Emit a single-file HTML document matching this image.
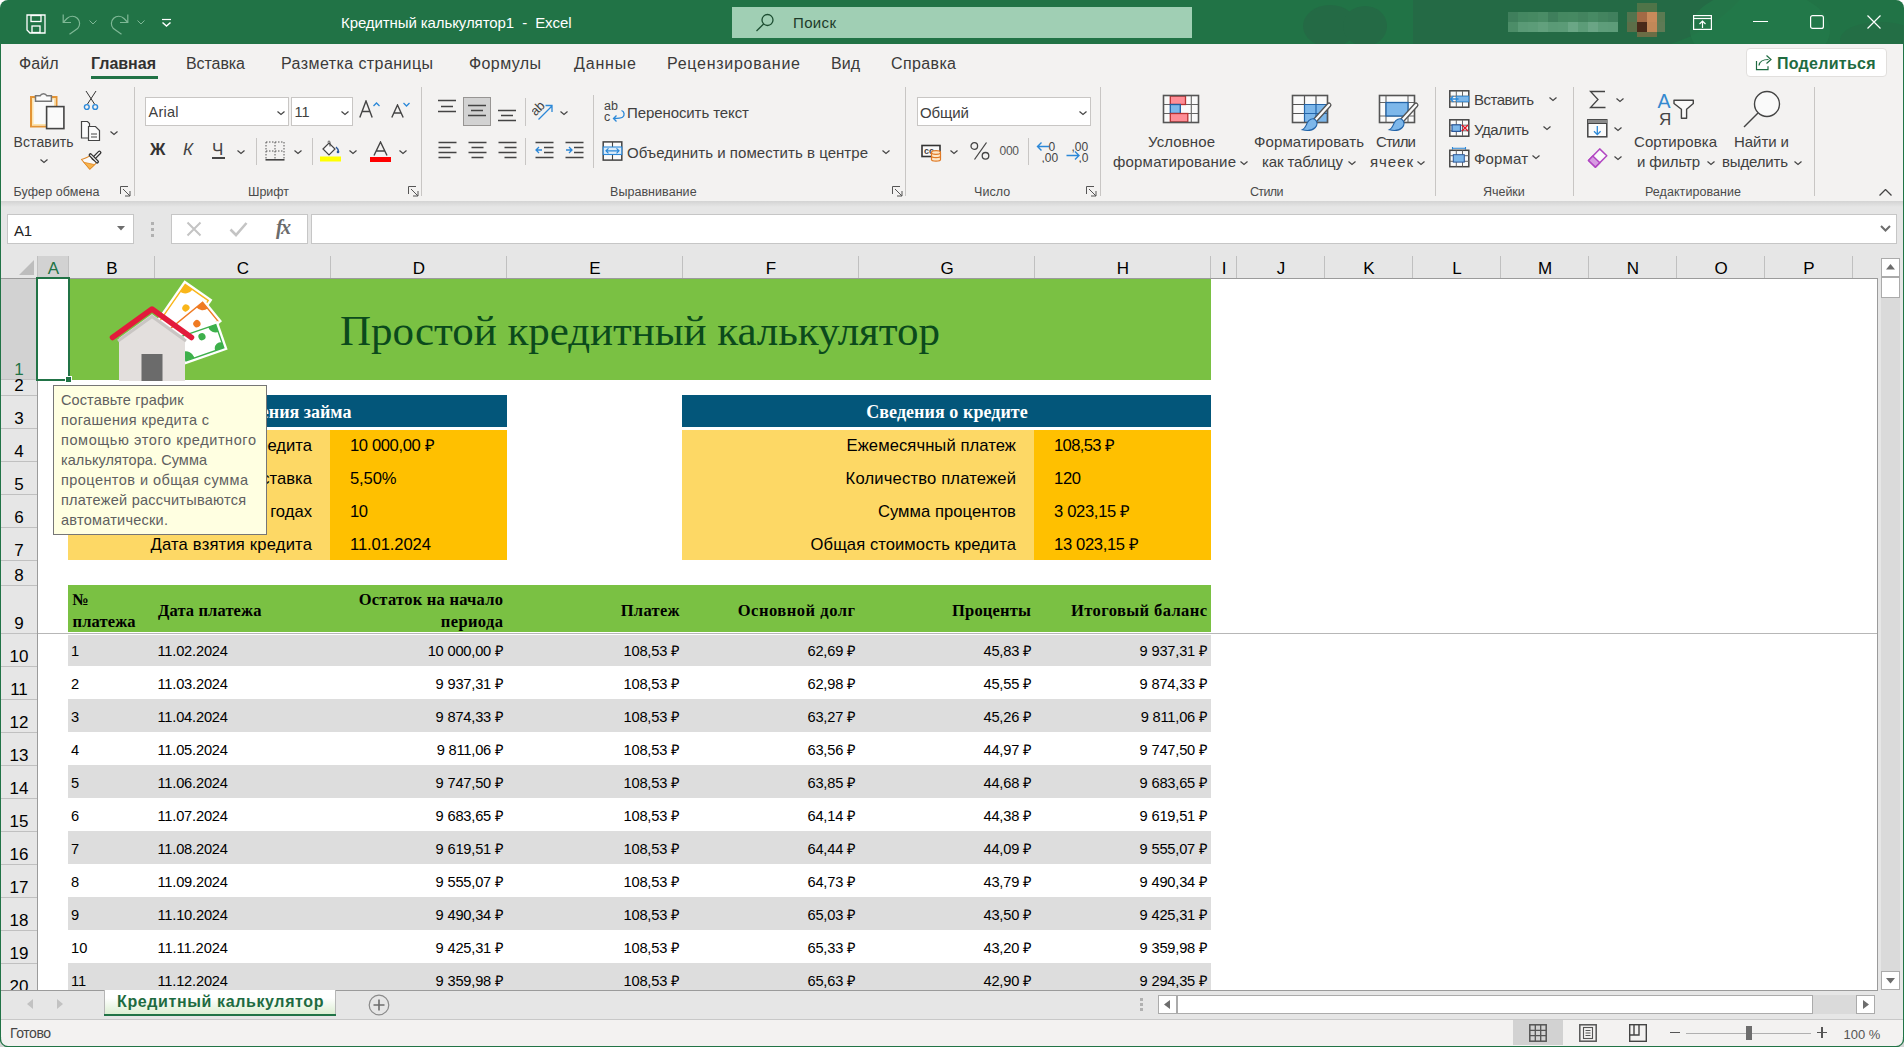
<!DOCTYPE html>
<html><head><meta charset="utf-8"><style>
html,body{margin:0;padding:0;background:#fff;width:1904px;height:1047px;overflow:hidden;position:relative;font-family:"Liberation Sans",sans-serif;}
.r{position:absolute;}
.t{position:absolute;white-space:nowrap;}
</style></head><body>
<div class="r" style="left:0px;top:0px;width:1904px;height:44px;background:#217346;border-radius:8px 8px 0 0;overflow:hidden;"></div>
<svg class="r" style="left:1250px;top:0px;" width="654" height="44" viewBox="0 0 654 44"><ellipse cx="80" cy="26" rx="27" ry="21" fill="#246a45"/><ellipse cx="115" cy="26" rx="22" ry="20" fill="#246a45"/><path d="M163 0H490C470 20 450 35 420 44H163z" fill="#246a45"/><ellipse cx="510" cy="30" rx="70" ry="40" fill="#237a4a" opacity="0.7"/><ellipse cx="630" cy="40" rx="40" ry="18" fill="#246a45" opacity="0.6"/></svg>
<svg class="r" style="left:26px;top:14px;" width="20" height="20" viewBox="0 0 20 20"><path d="M1 1h18v18H4l-3-3z" fill="none" stroke="#fff" stroke-width="1.3"/><rect x="5" y="1.5" width="10" height="6" fill="none" stroke="#fff" stroke-width="1.3"/><rect x="6" y="12" width="8" height="6.5" fill="none" stroke="#fff" stroke-width="1.3"/></svg>
<svg class="r" style="left:61px;top:13px;" width="22" height="22" viewBox="0 0 22 22"><path d="M2.2 1.5V9.5H10" fill="none" stroke="#7fb896" stroke-width="1.2"/><path d="M2.2 9.5L6 5.5A7.3 7.3 0 0 1 16.6 15.6L8.5 21.3" fill="none" stroke="#7fb896" stroke-width="1.2"/></svg>
<svg class="r" style="left:89px;top:20px;" width="8" height="5" viewBox="0 0 8 5"><path d="M0.5 0.5l3.5 3.5l3.5-3.5" fill="none" stroke="#7fb896" stroke-width="1"/></svg>
<svg class="r" style="left:108px;top:13px;" width="22" height="22" viewBox="0 0 22 22"><path d="M19.8 1.5V9.5H12" fill="none" stroke="#7fb896" stroke-width="1.2"/><path d="M19.8 9.5L16 5.5A7.3 7.3 0 0 0 5.4 15.6L13.5 21.3" fill="none" stroke="#7fb896" stroke-width="1.2"/></svg>
<svg class="r" style="left:137px;top:20px;" width="8" height="5" viewBox="0 0 8 5"><path d="M0.5 0.5l3.5 3.5l3.5-3.5" fill="none" stroke="#7fb896" stroke-width="1"/></svg>
<svg class="r" style="left:161px;top:18px;" width="11" height="10" viewBox="0 0 11 10"><path d="M1 1.5h9" stroke="#fff" stroke-width="1.2"/><path d="M1.5 4.5l4 3.5l4-3.5" fill="none" stroke="#fff" stroke-width="1.5"/></svg>
<div class="t" style="left:341.00px;top:15.00px;font-size:15px;line-height:15px;color:#ffffff;letter-spacing:-0.092px;white-space:pre;">Кредитный калькулятор1  -  Excel</div>
<div class="r" style="left:732px;top:7px;width:460px;height:31px;background:#a0cfb4;"></div>
<svg class="r" style="left:755px;top:13px;" width="20" height="20" viewBox="0 0 20 20"><circle cx="12.5" cy="7" r="5.5" fill="none" stroke="#1d4e32" stroke-width="1.3"/><path d="M8.6 11 L1.5 18" stroke="#1d4e32" stroke-width="1.3"/></svg>
<div class="t" style="left:793.00px;top:15.00px;font-size:15px;line-height:15px;color:#1d3b2a;letter-spacing:0.359px;">Поиск</div>
<div class="r" style="left:1508px;top:12px;width:10px;height:10px;background:#3f7f5c;"></div>
<div class="r" style="left:1508px;top:22px;width:10px;height:10px;background:#4c8d68;"></div>
<div class="r" style="left:1518px;top:12px;width:10px;height:10px;background:#448761;"></div>
<div class="r" style="left:1518px;top:22px;width:10px;height:10px;background:#5a9a76;"></div>
<div class="r" style="left:1528px;top:12px;width:10px;height:10px;background:#468962;"></div>
<div class="r" style="left:1528px;top:22px;width:10px;height:10px;background:#5c9c78;"></div>
<div class="r" style="left:1538px;top:12px;width:10px;height:10px;background:#4a8c66;"></div>
<div class="r" style="left:1538px;top:22px;width:10px;height:10px;background:#62a07d;"></div>
<div class="r" style="left:1548px;top:12px;width:10px;height:10px;background:#3f7f5c;"></div>
<div class="r" style="left:1548px;top:22px;width:10px;height:10px;background:#5a9a76;"></div>
<div class="r" style="left:1558px;top:12px;width:10px;height:10px;background:#458861;"></div>
<div class="r" style="left:1558px;top:22px;width:10px;height:10px;background:#5b9b77;"></div>
<div class="r" style="left:1568px;top:12px;width:10px;height:10px;background:#468962;"></div>
<div class="r" style="left:1568px;top:22px;width:10px;height:10px;background:#6aa685;"></div>
<div class="r" style="left:1578px;top:12px;width:10px;height:10px;background:#43845f;"></div>
<div class="r" style="left:1578px;top:22px;width:10px;height:10px;background:#5c9c78;"></div>
<div class="r" style="left:1588px;top:12px;width:10px;height:10px;background:#478a64;"></div>
<div class="r" style="left:1588px;top:22px;width:10px;height:10px;background:#6aa585;"></div>
<div class="r" style="left:1598px;top:12px;width:10px;height:10px;background:#43845f;"></div>
<div class="r" style="left:1598px;top:22px;width:10px;height:10px;background:#5e9d7a;"></div>
<div class="r" style="left:1608px;top:12px;width:10px;height:10px;background:#40805d;"></div>
<div class="r" style="left:1608px;top:22px;width:10px;height:10px;background:#5d9c79;"></div>
<div class="r" style="left:1627px;top:12px;width:10px;height:10px;background:#52744e;"></div>
<div class="r" style="left:1637px;top:12px;width:10px;height:10px;background:#a36a45;"></div>
<div class="r" style="left:1647px;top:12px;width:10px;height:10px;background:#c98a5a;"></div>
<div class="r" style="left:1657px;top:12px;width:8px;height:10px;background:#5b7a52;"></div>
<div class="r" style="left:1627px;top:22px;width:10px;height:10px;background:#5c6e48;"></div>
<div class="r" style="left:1637px;top:22px;width:10px;height:10px;background:#4a2a1a;"></div>
<div class="r" style="left:1647px;top:22px;width:10px;height:10px;background:#c28858;"></div>
<div class="r" style="left:1657px;top:22px;width:8px;height:10px;background:#5e7a55;"></div>
<div class="r" style="left:1637px;top:3px;width:20px;height:9px;background:#4f7448;"></div>
<div class="r" style="left:1637px;top:32px;width:20px;height:5px;background:#6b6d45;"></div>
<svg class="r" style="left:1693px;top:15px;" width="19" height="15" viewBox="0 0 19 15"><rect x="0.6" y="0.6" width="17.8" height="13.8" fill="none" stroke="#fff" stroke-width="1.2"/><path d="M0.6 3.5h17.8" stroke="#fff" stroke-width="1.2"/><path d="M9.5 13V6M6.5 9l3-3l3 3" fill="none" stroke="#fff" stroke-width="1.2"/></svg>
<div class="r" style="left:1753px;top:21px;width:15px;height:1.3px;background:#fff;"></div>
<svg class="r" style="left:1810px;top:15px;" width="14" height="14" viewBox="0 0 14 14"><rect x="0.6" y="0.6" width="12.8" height="12.8" rx="2" fill="none" stroke="#fff" stroke-width="1.2"/></svg>
<svg class="r" style="left:1867px;top:15px;" width="14" height="14" viewBox="0 0 14 14"><path d="M0.5 0.5l13 13M13.5 0.5l-13 13" stroke="#fff" stroke-width="1.2"/></svg>
<div class="r" style="left:1px;top:44px;width:1902px;height:157px;background:#f3f2f1;"></div>
<div class="r" style="left:0px;top:44px;width:1px;height:1003px;background:#217346;"></div>
<div class="r" style="left:1903px;top:44px;width:1px;height:1003px;background:#217346;"></div>
<div class="t" style="left:19.00px;top:56.20px;font-size:16px;line-height:16px;color:#3b3a39;letter-spacing:0.055px;">Файл</div>
<div class="t" style="left:91.00px;top:56.20px;font-size:16px;line-height:16px;color:#323130;font-weight:bold;letter-spacing:-0.012px;">Главная</div>
<div class="t" style="left:186.00px;top:56.20px;font-size:16px;line-height:16px;color:#3b3a39;letter-spacing:-0.078px;">Вставка</div>
<div class="t" style="left:281.00px;top:56.20px;font-size:16px;line-height:16px;color:#3b3a39;letter-spacing:0.428px;">Разметка страницы</div>
<div class="t" style="left:469.00px;top:56.20px;font-size:16px;line-height:16px;color:#3b3a39;letter-spacing:0.396px;">Формулы</div>
<div class="t" style="left:574.00px;top:56.20px;font-size:16px;line-height:16px;color:#3b3a39;letter-spacing:0.839px;">Данные</div>
<div class="t" style="left:667.00px;top:56.20px;font-size:16px;line-height:16px;color:#3b3a39;letter-spacing:0.727px;">Рецензирование</div>
<div class="t" style="left:831.00px;top:56.20px;font-size:16px;line-height:16px;color:#3b3a39;letter-spacing:0.027px;">Вид</div>
<div class="t" style="left:891.00px;top:56.20px;font-size:16px;line-height:16px;color:#3b3a39;letter-spacing:0.372px;">Справка</div>
<div class="r" style="left:91px;top:76px;width:67px;height:3px;background:#217346;"></div>
<div class="r" style="left:1746px;top:48px;width:141px;height:29px;background:#ffffff;border:1px solid #e1dfdd;border-radius:4px;box-sizing:border-box;"></div>
<svg class="r" style="left:1754px;top:53px;" width="20" height="20" viewBox="0 0 20 20"><path d="M2.5 8v8.7h11.5v-3.5" fill="none" stroke="#1e6b41" stroke-width="1.2"/><path d="M5 12.5c0.5-4 3.5-6 9.5-6" fill="none" stroke="#1e6b41" stroke-width="1.2"/><path d="M12.5 2.5l4.5 4l-4.5 4" fill="none" stroke="#1e6b41" stroke-width="1.2"/></svg>
<div class="t" style="left:1777.00px;top:56.20px;font-size:16px;line-height:16px;color:#1f6b41;font-weight:bold;letter-spacing:0.275px;">Поделиться</div>
<div class="r" style="left:1px;top:201px;width:1902px;height:6px;background:linear-gradient(#d3d3d3,#e6e6e6);"></div>
<div class="r" style="left:1px;top:207px;width:1902px;height:49px;background:#e6e6e6;"></div>
<div class="r" style="left:7px;top:214px;width:127px;height:30px;background:#ffffff;border:1px solid #c6c6c6;box-sizing:border-box;"></div>
<div class="t" style="left:14.00px;top:223.00px;font-size:15px;line-height:15px;color:#222222;letter-spacing:-0.348px;">A1</div>
<svg class="r" style="left:117px;top:226px;" width="8" height="5" viewBox="0 0 8 5"><path d="M0 0h8l-4 4.5z" fill="#6d6d6d"/></svg>
<div class="r" style="left:151px;top:222px;width:3px;height:3px;background:#b1b1b1;"></div>
<div class="r" style="left:151px;top:228px;width:3px;height:3px;background:#b1b1b1;"></div>
<div class="r" style="left:151px;top:234px;width:3px;height:3px;background:#b1b1b1;"></div>
<div class="r" style="left:171px;top:214px;width:137px;height:30px;background:#ffffff;border:1px solid #c6c6c6;box-sizing:border-box;"></div>
<svg class="r" style="left:186px;top:221px;" width="16" height="16" viewBox="0 0 16 16"><path d="M1.5 1.5l13 13M14.5 1.5l-13 13" stroke="#c4c4c4" stroke-width="2"/></svg>
<svg class="r" style="left:229px;top:221px;" width="19" height="16" viewBox="0 0 19 16"><path d="M1.5 8.5l5.5 5.5l10.5-12" fill="none" stroke="#c4c4c4" stroke-width="2.6"/></svg>
<div class="t" style="left:276.00px;top:217.30px;font-size:20px;line-height:20px;color:#6b6b6b;font-family:'Liberation Serif',serif;font-weight:bold;letter-spacing:-1.661px;font-style:italic;">fx</div>
<div class="r" style="left:311px;top:214px;width:1586px;height:30px;background:#ffffff;border:1px solid #c6c6c6;box-sizing:border-box;"></div>
<svg class="r" style="left:1880px;top:225px;" width="11" height="7" viewBox="0 0 11 7"><path d="M1 1l4.5 4.5l4.5-4.5" fill="none" stroke="#6d6d6d" stroke-width="2"/></svg>
<div class="r" style="left:1px;top:256px;width:1902px;height:22px;background:#e6e6e6;"></div>
<div class="r" style="left:1px;top:278px;width:1877px;height:1px;background:#9b9b9b;"></div>
<svg class="r" style="left:19px;top:260px;" width="16" height="15" viewBox="0 0 16 15"><path d="M15 0v15H0z" fill="#bdbdbd"/></svg>
<div class="r" style="left:37px;top:256px;width:31px;height:22px;background:#d2d2d2;"></div>
<div class="r" style="left:37px;top:256px;width:1px;height:22px;background:#c0c0c0;"></div>
<div class="r" style="left:68px;top:256px;width:1px;height:22px;background:#c0c0c0;"></div>
<div class="r" style="left:154px;top:256px;width:1px;height:22px;background:#c0c0c0;"></div>
<div class="r" style="left:330px;top:256px;width:1px;height:22px;background:#c0c0c0;"></div>
<div class="r" style="left:506px;top:256px;width:1px;height:22px;background:#c0c0c0;"></div>
<div class="r" style="left:682px;top:256px;width:1px;height:22px;background:#c0c0c0;"></div>
<div class="r" style="left:858px;top:256px;width:1px;height:22px;background:#c0c0c0;"></div>
<div class="r" style="left:1034px;top:256px;width:1px;height:22px;background:#c0c0c0;"></div>
<div class="r" style="left:1210px;top:256px;width:1px;height:22px;background:#c0c0c0;"></div>
<div class="r" style="left:1236px;top:256px;width:1px;height:22px;background:#c0c0c0;"></div>
<div class="r" style="left:1324px;top:256px;width:1px;height:22px;background:#c0c0c0;"></div>
<div class="r" style="left:1412px;top:256px;width:1px;height:22px;background:#c0c0c0;"></div>
<div class="r" style="left:1500px;top:256px;width:1px;height:22px;background:#c0c0c0;"></div>
<div class="r" style="left:1588px;top:256px;width:1px;height:22px;background:#c0c0c0;"></div>
<div class="r" style="left:1676px;top:256px;width:1px;height:22px;background:#c0c0c0;"></div>
<div class="r" style="left:1764px;top:256px;width:1px;height:22px;background:#c0c0c0;"></div>
<div class="r" style="left:1852px;top:256px;width:1px;height:22px;background:#c0c0c0;"></div>
<div class="t" style="left:47.83px;top:260.40px;font-size:17px;line-height:17px;color:#217346;">A</div>
<div class="t" style="left:106.33px;top:260.40px;font-size:17px;line-height:17px;color:#000000;">B</div>
<div class="t" style="left:236.86px;top:260.40px;font-size:17px;line-height:17px;color:#000000;">C</div>
<div class="t" style="left:412.86px;top:260.40px;font-size:17px;line-height:17px;color:#000000;">D</div>
<div class="t" style="left:589.33px;top:260.40px;font-size:17px;line-height:17px;color:#000000;">E</div>
<div class="t" style="left:765.81px;top:260.40px;font-size:17px;line-height:17px;color:#000000;">F</div>
<div class="t" style="left:940.39px;top:260.40px;font-size:17px;line-height:17px;color:#000000;">G</div>
<div class="t" style="left:1116.86px;top:260.40px;font-size:17px;line-height:17px;color:#000000;">H</div>
<div class="t" style="left:1221.64px;top:260.40px;font-size:17px;line-height:17px;color:#000000;">I</div>
<div class="t" style="left:1276.75px;top:260.40px;font-size:17px;line-height:17px;color:#000000;">J</div>
<div class="t" style="left:1363.33px;top:260.40px;font-size:17px;line-height:17px;color:#000000;">K</div>
<div class="t" style="left:1452.27px;top:260.40px;font-size:17px;line-height:17px;color:#000000;">L</div>
<div class="t" style="left:1537.92px;top:260.40px;font-size:17px;line-height:17px;color:#000000;">M</div>
<div class="t" style="left:1626.86px;top:260.40px;font-size:17px;line-height:17px;color:#000000;">N</div>
<div class="t" style="left:1714.39px;top:260.40px;font-size:17px;line-height:17px;color:#000000;">O</div>
<div class="t" style="left:1803.33px;top:260.40px;font-size:17px;line-height:17px;color:#000000;">P</div>
<div class="r" style="left:1px;top:279px;width:36px;height:711px;background:#e6e6e6;"></div>
<div class="r" style="left:37px;top:279px;width:1px;height:711px;background:#9b9b9b;"></div>
<div class="r" style="left:1px;top:279px;width:36px;height:100px;background:#d2d2d2;"></div>
<div class="r" style="left:1px;top:379px;width:36px;height:1px;background:#c0c0c0;"></div>
<div class="t" style="left:14.27px;top:361.40px;font-size:17px;line-height:17px;color:#217346;">1</div>
<div class="r" style="left:1px;top:395px;width:36px;height:1px;background:#c0c0c0;"></div>
<div class="t" style="left:14.27px;top:376.90px;font-size:17px;line-height:17px;color:#000000;">2</div>
<div class="r" style="left:1px;top:428px;width:36px;height:1px;background:#c0c0c0;"></div>
<div class="t" style="left:14.27px;top:409.90px;font-size:17px;line-height:17px;color:#000000;">3</div>
<div class="r" style="left:1px;top:461px;width:36px;height:1px;background:#c0c0c0;"></div>
<div class="t" style="left:14.27px;top:442.90px;font-size:17px;line-height:17px;color:#000000;">4</div>
<div class="r" style="left:1px;top:494px;width:36px;height:1px;background:#c0c0c0;"></div>
<div class="t" style="left:14.27px;top:475.90px;font-size:17px;line-height:17px;color:#000000;">5</div>
<div class="r" style="left:1px;top:527px;width:36px;height:1px;background:#c0c0c0;"></div>
<div class="t" style="left:14.27px;top:508.90px;font-size:17px;line-height:17px;color:#000000;">6</div>
<div class="r" style="left:1px;top:560px;width:36px;height:1px;background:#c0c0c0;"></div>
<div class="t" style="left:14.27px;top:541.90px;font-size:17px;line-height:17px;color:#000000;">7</div>
<div class="r" style="left:1px;top:585px;width:36px;height:1px;background:#c0c0c0;"></div>
<div class="t" style="left:14.27px;top:566.90px;font-size:17px;line-height:17px;color:#000000;">8</div>
<div class="r" style="left:1px;top:633px;width:36px;height:1px;background:#c0c0c0;"></div>
<div class="t" style="left:14.27px;top:614.90px;font-size:17px;line-height:17px;color:#000000;">9</div>
<div class="r" style="left:1px;top:666px;width:36px;height:1px;background:#c0c0c0;"></div>
<div class="t" style="left:9.55px;top:647.90px;font-size:17px;line-height:17px;color:#000000;">10</div>
<div class="r" style="left:1px;top:699px;width:36px;height:1px;background:#c0c0c0;"></div>
<div class="t" style="left:10.18px;top:680.90px;font-size:17px;line-height:17px;color:#000000;">11</div>
<div class="r" style="left:1px;top:732px;width:36px;height:1px;background:#c0c0c0;"></div>
<div class="t" style="left:9.55px;top:713.90px;font-size:17px;line-height:17px;color:#000000;">12</div>
<div class="r" style="left:1px;top:765px;width:36px;height:1px;background:#c0c0c0;"></div>
<div class="t" style="left:9.55px;top:746.90px;font-size:17px;line-height:17px;color:#000000;">13</div>
<div class="r" style="left:1px;top:798px;width:36px;height:1px;background:#c0c0c0;"></div>
<div class="t" style="left:9.55px;top:779.90px;font-size:17px;line-height:17px;color:#000000;">14</div>
<div class="r" style="left:1px;top:831px;width:36px;height:1px;background:#c0c0c0;"></div>
<div class="t" style="left:9.55px;top:812.90px;font-size:17px;line-height:17px;color:#000000;">15</div>
<div class="r" style="left:1px;top:864px;width:36px;height:1px;background:#c0c0c0;"></div>
<div class="t" style="left:9.55px;top:845.90px;font-size:17px;line-height:17px;color:#000000;">16</div>
<div class="r" style="left:1px;top:897px;width:36px;height:1px;background:#c0c0c0;"></div>
<div class="t" style="left:9.55px;top:878.90px;font-size:17px;line-height:17px;color:#000000;">17</div>
<div class="r" style="left:1px;top:930px;width:36px;height:1px;background:#c0c0c0;"></div>
<div class="t" style="left:9.55px;top:911.90px;font-size:17px;line-height:17px;color:#000000;">18</div>
<div class="r" style="left:1px;top:963px;width:36px;height:1px;background:#c0c0c0;"></div>
<div class="t" style="left:9.55px;top:944.90px;font-size:17px;line-height:17px;color:#000000;">19</div>
<div class="t" style="left:9.55px;top:977.90px;font-size:17px;line-height:17px;color:#000000;">20</div>
<div class="r" style="left:38px;top:279px;width:1840px;height:711px;background:#ffffff;"></div>
<div class="r" style="left:68px;top:279px;width:1143px;height:101px;background:#7ac143;"></div>
<div class="t" style="left:340.00px;top:309.10px;font-size:43px;line-height:43px;color:#0b4a1c;font-family:'Liberation Serif',serif;letter-spacing:-0.039px;">Простой кредитный калькулятор</div>
<div class="r" style="left:68px;top:395px;width:439px;height:32px;background:#03567a;"></div>
<div class="r" style="left:682px;top:395px;width:529px;height:32px;background:#03567a;"></div>
<div class="t" style="left:222.49px;top:402.97px;font-size:18px;line-height:18px;color:#ffffff;font-family:'Liberation Serif',serif;font-weight:bold;">Значения займа</div>
<div class="t" style="left:866.25px;top:402.97px;font-size:18px;line-height:18px;color:#ffffff;font-family:'Liberation Serif',serif;font-weight:bold;letter-spacing:0.060px;">Сведения о кредите</div>
<div class="r" style="left:68px;top:430px;width:262px;height:130px;background:#fdd865;"></div>
<div class="r" style="left:330px;top:430px;width:177px;height:130px;background:#ffc000;"></div>
<div class="r" style="left:682px;top:430px;width:352px;height:130px;background:#fdd865;"></div>
<div class="r" style="left:1034px;top:430px;width:177px;height:130px;background:#ffc000;"></div>
<div class="t" style="left:194.26px;top:438.22px;font-size:16.6px;line-height:16.6px;color:#000000;">Сумма кредита</div>
<div class="t" style="left:350.00px;top:438.22px;font-size:16.6px;line-height:16.6px;color:#000000;letter-spacing:-0.391px;">10 000,00 ₽</div>
<div class="t" style="left:846.50px;top:438.22px;font-size:16.6px;line-height:16.6px;color:#000000;letter-spacing:0.083px;">Ежемесячный платеж</div>
<div class="t" style="left:1054.00px;top:438.22px;font-size:16.6px;line-height:16.6px;color:#000000;letter-spacing:-0.648px;">108,53 ₽</div>
<div class="t" style="left:99.46px;top:471.22px;font-size:16.6px;line-height:16.6px;color:#000000;">Годовая процентная ставка</div>
<div class="t" style="left:350.00px;top:471.22px;font-size:16.6px;line-height:16.6px;color:#000000;letter-spacing:-0.142px;">5,50%</div>
<div class="t" style="left:845.60px;top:471.22px;font-size:16.6px;line-height:16.6px;color:#000000;letter-spacing:0.168px;">Количество платежей</div>
<div class="t" style="left:1054.00px;top:471.22px;font-size:16.6px;line-height:16.6px;color:#000000;letter-spacing:-0.349px;">120</div>
<div class="t" style="left:163.09px;top:504.22px;font-size:16.6px;line-height:16.6px;color:#000000;">Срок займа в годах</div>
<div class="t" style="left:350.00px;top:504.22px;font-size:16.6px;line-height:16.6px;color:#000000;letter-spacing:-0.465px;">10</div>
<div class="t" style="left:877.90px;top:504.22px;font-size:16.6px;line-height:16.6px;color:#000000;letter-spacing:0.049px;">Сумма процентов</div>
<div class="t" style="left:1054.00px;top:504.22px;font-size:16.6px;line-height:16.6px;color:#000000;letter-spacing:-0.331px;">3 023,15 ₽</div>
<div class="t" style="left:150.50px;top:537.22px;font-size:16.6px;line-height:16.6px;color:#000000;letter-spacing:0.192px;">Дата взятия кредита</div>
<div class="t" style="left:350.00px;top:537.22px;font-size:16.6px;line-height:16.6px;color:#000000;letter-spacing:-0.095px;">11.01.2024</div>
<div class="t" style="left:810.60px;top:537.22px;font-size:16.6px;line-height:16.6px;color:#000000;letter-spacing:0.068px;">Общая стоимость кредита</div>
<div class="t" style="left:1054.00px;top:537.22px;font-size:16.6px;line-height:16.6px;color:#000000;letter-spacing:-0.341px;">13 023,15 ₽</div>
<div class="r" style="left:68px;top:585px;width:1143px;height:47px;background:#7ac143;"></div>
<div class="t" style="left:72.00px;top:592.22px;font-size:16.5px;line-height:16.5px;color:#000000;font-family:'Liberation Serif',serif;font-weight:bold;">№</div>
<div class="t" style="left:72.50px;top:614.22px;font-size:16.5px;line-height:16.5px;color:#000000;font-family:'Liberation Serif',serif;font-weight:bold;letter-spacing:0.128px;">платежа</div>
<div class="t" style="left:158.00px;top:603.22px;font-size:16.5px;line-height:16.5px;color:#000000;font-family:'Liberation Serif',serif;font-weight:bold;letter-spacing:0.119px;">Дата платежа</div>
<div class="t" style="left:358.70px;top:592.22px;font-size:16.5px;line-height:16.5px;color:#000000;font-family:'Liberation Serif',serif;font-weight:bold;letter-spacing:0.254px;">Остаток на начало</div>
<div class="t" style="left:440.80px;top:614.22px;font-size:16.5px;line-height:16.5px;color:#000000;font-family:'Liberation Serif',serif;font-weight:bold;letter-spacing:0.386px;">периода</div>
<div class="t" style="left:620.70px;top:603.22px;font-size:16.5px;line-height:16.5px;color:#000000;font-family:'Liberation Serif',serif;font-weight:bold;letter-spacing:0.299px;">Платеж</div>
<div class="t" style="left:737.70px;top:603.22px;font-size:16.5px;line-height:16.5px;color:#000000;font-family:'Liberation Serif',serif;font-weight:bold;letter-spacing:0.531px;">Основной долг</div>
<div class="t" style="left:952.00px;top:603.22px;font-size:16.5px;line-height:16.5px;color:#000000;font-family:'Liberation Serif',serif;font-weight:bold;letter-spacing:0.202px;">Проценты</div>
<div class="t" style="left:1071.00px;top:603.22px;font-size:16.5px;line-height:16.5px;color:#000000;font-family:'Liberation Serif',serif;font-weight:bold;letter-spacing:0.407px;">Итоговый баланс</div>
<div class="r" style="left:38px;top:633px;width:1840px;height:1px;background:#b7b7b7;"></div>
<div class="r" style="left:68px;top:635px;width:1143px;height:31px;background:#dddddd;"></div>
<div class="t" style="left:71.00px;top:644.26px;font-size:14.67px;line-height:14.67px;color:#000000;">1</div>
<div class="t" style="left:157.50px;top:644.26px;font-size:14.67px;line-height:14.67px;color:#000000;letter-spacing:-0.204px;">11.02.2024</div>
<div class="t" style="left:427.67px;top:644.26px;font-size:14.67px;line-height:14.67px;color:#000000;letter-spacing:-0.201px;">10 000,00 ₽</div>
<div class="t" style="left:623.55px;top:644.26px;font-size:14.67px;line-height:14.67px;color:#000000;letter-spacing:-0.214px;">108,53 ₽</div>
<div class="t" style="left:807.51px;top:644.26px;font-size:14.67px;line-height:14.67px;color:#000000;letter-spacing:-0.216px;">62,69 ₽</div>
<div class="t" style="left:983.51px;top:644.26px;font-size:14.67px;line-height:14.67px;color:#000000;letter-spacing:-0.216px;">45,83 ₽</div>
<div class="t" style="left:1139.62px;top:644.26px;font-size:14.67px;line-height:14.67px;color:#000000;letter-spacing:-0.201px;">9 937,31 ₽</div>
<div class="t" style="left:71.00px;top:677.26px;font-size:14.67px;line-height:14.67px;color:#000000;">2</div>
<div class="t" style="left:157.50px;top:677.26px;font-size:14.67px;line-height:14.67px;color:#000000;letter-spacing:-0.204px;">11.03.2024</div>
<div class="t" style="left:435.62px;top:677.26px;font-size:14.67px;line-height:14.67px;color:#000000;letter-spacing:-0.201px;">9 937,31 ₽</div>
<div class="t" style="left:623.55px;top:677.26px;font-size:14.67px;line-height:14.67px;color:#000000;letter-spacing:-0.214px;">108,53 ₽</div>
<div class="t" style="left:807.51px;top:677.26px;font-size:14.67px;line-height:14.67px;color:#000000;letter-spacing:-0.216px;">62,98 ₽</div>
<div class="t" style="left:983.51px;top:677.26px;font-size:14.67px;line-height:14.67px;color:#000000;letter-spacing:-0.216px;">45,55 ₽</div>
<div class="t" style="left:1139.62px;top:677.26px;font-size:14.67px;line-height:14.67px;color:#000000;letter-spacing:-0.201px;">9 874,33 ₽</div>
<div class="r" style="left:68px;top:699px;width:1143px;height:33px;background:#dddddd;"></div>
<div class="t" style="left:71.00px;top:710.26px;font-size:14.67px;line-height:14.67px;color:#000000;">3</div>
<div class="t" style="left:157.50px;top:710.26px;font-size:14.67px;line-height:14.67px;color:#000000;letter-spacing:-0.204px;">11.04.2024</div>
<div class="t" style="left:435.62px;top:710.26px;font-size:14.67px;line-height:14.67px;color:#000000;letter-spacing:-0.201px;">9 874,33 ₽</div>
<div class="t" style="left:623.55px;top:710.26px;font-size:14.67px;line-height:14.67px;color:#000000;letter-spacing:-0.214px;">108,53 ₽</div>
<div class="t" style="left:807.51px;top:710.26px;font-size:14.67px;line-height:14.67px;color:#000000;letter-spacing:-0.216px;">63,27 ₽</div>
<div class="t" style="left:983.51px;top:710.26px;font-size:14.67px;line-height:14.67px;color:#000000;letter-spacing:-0.216px;">45,26 ₽</div>
<div class="t" style="left:1140.68px;top:710.26px;font-size:14.67px;line-height:14.67px;color:#000000;letter-spacing:-0.197px;">9 811,06 ₽</div>
<div class="t" style="left:71.00px;top:743.26px;font-size:14.67px;line-height:14.67px;color:#000000;">4</div>
<div class="t" style="left:157.50px;top:743.26px;font-size:14.67px;line-height:14.67px;color:#000000;letter-spacing:-0.204px;">11.05.2024</div>
<div class="t" style="left:436.68px;top:743.26px;font-size:14.67px;line-height:14.67px;color:#000000;letter-spacing:-0.197px;">9 811,06 ₽</div>
<div class="t" style="left:623.55px;top:743.26px;font-size:14.67px;line-height:14.67px;color:#000000;letter-spacing:-0.214px;">108,53 ₽</div>
<div class="t" style="left:807.51px;top:743.26px;font-size:14.67px;line-height:14.67px;color:#000000;letter-spacing:-0.216px;">63,56 ₽</div>
<div class="t" style="left:983.51px;top:743.26px;font-size:14.67px;line-height:14.67px;color:#000000;letter-spacing:-0.216px;">44,97 ₽</div>
<div class="t" style="left:1139.62px;top:743.26px;font-size:14.67px;line-height:14.67px;color:#000000;letter-spacing:-0.201px;">9 747,50 ₽</div>
<div class="r" style="left:68px;top:765px;width:1143px;height:33px;background:#dddddd;"></div>
<div class="t" style="left:71.00px;top:776.26px;font-size:14.67px;line-height:14.67px;color:#000000;">5</div>
<div class="t" style="left:157.50px;top:776.26px;font-size:14.67px;line-height:14.67px;color:#000000;letter-spacing:-0.204px;">11.06.2024</div>
<div class="t" style="left:435.62px;top:776.26px;font-size:14.67px;line-height:14.67px;color:#000000;letter-spacing:-0.201px;">9 747,50 ₽</div>
<div class="t" style="left:623.55px;top:776.26px;font-size:14.67px;line-height:14.67px;color:#000000;letter-spacing:-0.214px;">108,53 ₽</div>
<div class="t" style="left:807.51px;top:776.26px;font-size:14.67px;line-height:14.67px;color:#000000;letter-spacing:-0.216px;">63,85 ₽</div>
<div class="t" style="left:983.51px;top:776.26px;font-size:14.67px;line-height:14.67px;color:#000000;letter-spacing:-0.216px;">44,68 ₽</div>
<div class="t" style="left:1139.62px;top:776.26px;font-size:14.67px;line-height:14.67px;color:#000000;letter-spacing:-0.201px;">9 683,65 ₽</div>
<div class="t" style="left:71.00px;top:809.26px;font-size:14.67px;line-height:14.67px;color:#000000;">6</div>
<div class="t" style="left:157.50px;top:809.26px;font-size:14.67px;line-height:14.67px;color:#000000;letter-spacing:-0.204px;">11.07.2024</div>
<div class="t" style="left:435.62px;top:809.26px;font-size:14.67px;line-height:14.67px;color:#000000;letter-spacing:-0.201px;">9 683,65 ₽</div>
<div class="t" style="left:623.55px;top:809.26px;font-size:14.67px;line-height:14.67px;color:#000000;letter-spacing:-0.214px;">108,53 ₽</div>
<div class="t" style="left:807.51px;top:809.26px;font-size:14.67px;line-height:14.67px;color:#000000;letter-spacing:-0.216px;">64,14 ₽</div>
<div class="t" style="left:983.51px;top:809.26px;font-size:14.67px;line-height:14.67px;color:#000000;letter-spacing:-0.216px;">44,38 ₽</div>
<div class="t" style="left:1139.62px;top:809.26px;font-size:14.67px;line-height:14.67px;color:#000000;letter-spacing:-0.201px;">9 619,51 ₽</div>
<div class="r" style="left:68px;top:831px;width:1143px;height:33px;background:#dddddd;"></div>
<div class="t" style="left:71.00px;top:842.26px;font-size:14.67px;line-height:14.67px;color:#000000;">7</div>
<div class="t" style="left:157.50px;top:842.26px;font-size:14.67px;line-height:14.67px;color:#000000;letter-spacing:-0.204px;">11.08.2024</div>
<div class="t" style="left:435.62px;top:842.26px;font-size:14.67px;line-height:14.67px;color:#000000;letter-spacing:-0.201px;">9 619,51 ₽</div>
<div class="t" style="left:623.55px;top:842.26px;font-size:14.67px;line-height:14.67px;color:#000000;letter-spacing:-0.214px;">108,53 ₽</div>
<div class="t" style="left:807.51px;top:842.26px;font-size:14.67px;line-height:14.67px;color:#000000;letter-spacing:-0.216px;">64,44 ₽</div>
<div class="t" style="left:983.51px;top:842.26px;font-size:14.67px;line-height:14.67px;color:#000000;letter-spacing:-0.216px;">44,09 ₽</div>
<div class="t" style="left:1139.62px;top:842.26px;font-size:14.67px;line-height:14.67px;color:#000000;letter-spacing:-0.201px;">9 555,07 ₽</div>
<div class="t" style="left:71.00px;top:875.26px;font-size:14.67px;line-height:14.67px;color:#000000;">8</div>
<div class="t" style="left:157.50px;top:875.26px;font-size:14.67px;line-height:14.67px;color:#000000;letter-spacing:-0.204px;">11.09.2024</div>
<div class="t" style="left:435.62px;top:875.26px;font-size:14.67px;line-height:14.67px;color:#000000;letter-spacing:-0.201px;">9 555,07 ₽</div>
<div class="t" style="left:623.55px;top:875.26px;font-size:14.67px;line-height:14.67px;color:#000000;letter-spacing:-0.214px;">108,53 ₽</div>
<div class="t" style="left:807.51px;top:875.26px;font-size:14.67px;line-height:14.67px;color:#000000;letter-spacing:-0.216px;">64,73 ₽</div>
<div class="t" style="left:983.51px;top:875.26px;font-size:14.67px;line-height:14.67px;color:#000000;letter-spacing:-0.216px;">43,79 ₽</div>
<div class="t" style="left:1139.62px;top:875.26px;font-size:14.67px;line-height:14.67px;color:#000000;letter-spacing:-0.201px;">9 490,34 ₽</div>
<div class="r" style="left:68px;top:897px;width:1143px;height:33px;background:#dddddd;"></div>
<div class="t" style="left:71.00px;top:908.26px;font-size:14.67px;line-height:14.67px;color:#000000;">9</div>
<div class="t" style="left:157.50px;top:908.26px;font-size:14.67px;line-height:14.67px;color:#000000;letter-spacing:-0.204px;">11.10.2024</div>
<div class="t" style="left:435.62px;top:908.26px;font-size:14.67px;line-height:14.67px;color:#000000;letter-spacing:-0.201px;">9 490,34 ₽</div>
<div class="t" style="left:623.55px;top:908.26px;font-size:14.67px;line-height:14.67px;color:#000000;letter-spacing:-0.214px;">108,53 ₽</div>
<div class="t" style="left:807.51px;top:908.26px;font-size:14.67px;line-height:14.67px;color:#000000;letter-spacing:-0.216px;">65,03 ₽</div>
<div class="t" style="left:983.51px;top:908.26px;font-size:14.67px;line-height:14.67px;color:#000000;letter-spacing:-0.216px;">43,50 ₽</div>
<div class="t" style="left:1139.62px;top:908.26px;font-size:14.67px;line-height:14.67px;color:#000000;letter-spacing:-0.201px;">9 425,31 ₽</div>
<div class="t" style="left:71.00px;top:941.26px;font-size:14.67px;line-height:14.67px;color:#000000;">10</div>
<div class="t" style="left:157.50px;top:941.26px;font-size:14.67px;line-height:14.67px;color:#000000;letter-spacing:-0.083px;">11.11.2024</div>
<div class="t" style="left:435.62px;top:941.26px;font-size:14.67px;line-height:14.67px;color:#000000;letter-spacing:-0.201px;">9 425,31 ₽</div>
<div class="t" style="left:623.55px;top:941.26px;font-size:14.67px;line-height:14.67px;color:#000000;letter-spacing:-0.214px;">108,53 ₽</div>
<div class="t" style="left:807.51px;top:941.26px;font-size:14.67px;line-height:14.67px;color:#000000;letter-spacing:-0.216px;">65,33 ₽</div>
<div class="t" style="left:983.51px;top:941.26px;font-size:14.67px;line-height:14.67px;color:#000000;letter-spacing:-0.216px;">43,20 ₽</div>
<div class="t" style="left:1139.62px;top:941.26px;font-size:14.67px;line-height:14.67px;color:#000000;letter-spacing:-0.201px;">9 359,98 ₽</div>
<div class="r" style="left:68px;top:963px;width:1143px;height:27px;background:#dddddd;"></div>
<div class="t" style="left:71.00px;top:974.26px;font-size:14.67px;line-height:14.67px;color:#000000;">11</div>
<div class="t" style="left:157.50px;top:974.26px;font-size:14.67px;line-height:14.67px;color:#000000;letter-spacing:-0.204px;">11.12.2024</div>
<div class="t" style="left:435.62px;top:974.26px;font-size:14.67px;line-height:14.67px;color:#000000;letter-spacing:-0.201px;">9 359,98 ₽</div>
<div class="t" style="left:623.55px;top:974.26px;font-size:14.67px;line-height:14.67px;color:#000000;letter-spacing:-0.214px;">108,53 ₽</div>
<div class="t" style="left:807.51px;top:974.26px;font-size:14.67px;line-height:14.67px;color:#000000;letter-spacing:-0.216px;">65,63 ₽</div>
<div class="t" style="left:983.51px;top:974.26px;font-size:14.67px;line-height:14.67px;color:#000000;letter-spacing:-0.216px;">42,90 ₽</div>
<div class="t" style="left:1139.62px;top:974.26px;font-size:14.67px;line-height:14.67px;color:#000000;letter-spacing:-0.201px;">9 294,35 ₽</div>
<div class="r" style="left:36px;top:277px;width:34px;height:104px;background:transparent;border:2px solid #217346;box-sizing:border-box;"></div>
<div class="r" style="left:66px;top:377px;width:5px;height:5px;background:#217346;outline:1px solid #fff;"></div>
<div class="r" style="left:1px;top:990px;width:1902px;height:29px;background:#e6e6e6;"></div>
<div class="r" style="left:1px;top:990px;width:1877px;height:1px;background:#9b9b9b;"></div>
<div class="r" style="left:1px;top:1019px;width:1902px;height:1px;background:#c8c8c8;"></div>
<div class="r" style="left:1878px;top:256px;width:25px;height:734px;background:#e6e6e6;"></div>
<div class="r" style="left:1877px;top:278px;width:1px;height:712px;background:#9b9b9b;"></div>
<div class="r" style="left:1881px;top:276px;width:19px;height:695px;background:#dadada;"></div>
<div class="r" style="left:1881px;top:258px;width:19px;height:19px;background:#ffffff;border:1px solid #ababab;box-sizing:border-box;"></div>
<svg class="r" style="left:1886px;top:264px;" width="9" height="6" viewBox="0 0 9 6"><path d="M0 5.5h9L4.5 0z" fill="#6d6d6d"/></svg>
<div class="r" style="left:1881px;top:277px;width:19px;height:21px;background:#ffffff;border:1px solid #ababab;box-sizing:border-box;"></div>
<div class="r" style="left:1881px;top:971px;width:19px;height:19px;background:#ffffff;border:1px solid #ababab;box-sizing:border-box;"></div>
<svg class="r" style="left:1886px;top:978px;" width="9" height="6" viewBox="0 0 9 6"><path d="M0 0h9L4.5 5.5z" fill="#6d6d6d"/></svg>
<svg class="r" style="left:27px;top:999px;" width="6" height="10" viewBox="0 0 6 10"><path d="M6 0v10L0 5z" fill="#c2c2c2"/></svg>
<svg class="r" style="left:57px;top:999px;" width="6" height="10" viewBox="0 0 6 10"><path d="M0 0v10l6-5z" fill="#c2c2c2"/></svg>
<div class="r" style="left:104px;top:990px;width:232px;height:26px;background:linear-gradient(#ffffff 30%,#d8eccd);border-left:1px solid #b6b6b6;border-right:1px solid #b6b6b6;box-sizing:border-box;"></div>
<div class="r" style="left:104px;top:1014px;width:232px;height:2px;background:#217346;"></div>
<div class="t" style="left:117.00px;top:994.20px;font-size:16px;line-height:16px;color:#1e6b41;font-weight:bold;letter-spacing:0.617px;">Кредитный калькулятор</div>
<svg class="r" style="left:368px;top:994px;" width="22" height="22" viewBox="0 0 22 22"><circle cx="11" cy="11" r="9.8" fill="none" stroke="#8a8a8a" stroke-width="1.2"/><path d="M11 5.5v11M5.5 11h11" stroke="#6d6d6d" stroke-width="1.6"/></svg>
<div class="r" style="left:1140px;top:998px;width:3px;height:3px;background:#b1b1b1;"></div>
<div class="r" style="left:1140px;top:1003px;width:3px;height:3px;background:#b1b1b1;"></div>
<div class="r" style="left:1140px;top:1008px;width:3px;height:3px;background:#b1b1b1;"></div>
<div class="r" style="left:1158px;top:995px;width:717px;height:19px;background:#dadada;"></div>
<div class="r" style="left:1158px;top:995px;width:19px;height:19px;background:#ffffff;border:1px solid #ababab;box-sizing:border-box;"></div>
<svg class="r" style="left:1164px;top:1000px;" width="6" height="9" viewBox="0 0 6 9"><path d="M6 0v9L0 4.5z" fill="#6d6d6d"/></svg>
<div class="r" style="left:1177px;top:995px;width:636px;height:19px;background:#ffffff;border:1px solid #ababab;box-sizing:border-box;"></div>
<div class="r" style="left:1856px;top:995px;width:19px;height:19px;background:#ffffff;border:1px solid #ababab;box-sizing:border-box;"></div>
<svg class="r" style="left:1863px;top:1000px;" width="6" height="9" viewBox="0 0 6 9"><path d="M0 0v9l6-4.5z" fill="#6d6d6d"/></svg>
<div class="r" style="left:1px;top:1020px;width:1902px;height:26px;background:#f3f2f1;"></div>
<div class="r" style="left:0px;top:1046px;width:1904px;height:1px;background:#217346;"></div>
<div class="t" style="left:10.00px;top:1026.30px;font-size:14px;line-height:14px;color:#454545;letter-spacing:-0.446px;">Готово</div>
<div class="r" style="left:1513px;top:1020px;width:50px;height:25px;background:#d2d2d2;"></div>
<svg class="r" style="left:1529px;top:1024px;" width="18" height="18" viewBox="0 0 18 18"><rect x="0.8" y="0.8" width="16.4" height="16.4" fill="none" stroke="#555" stroke-width="1.5"/><path d="M6.3 1v16M11.7 1v16M1 6.3h16M1 11.7h16" stroke="#555" stroke-width="1.3"/></svg>
<svg class="r" style="left:1579px;top:1024px;" width="18" height="18" viewBox="0 0 18 18"><rect x="0.8" y="0.8" width="16.4" height="16.4" fill="none" stroke="#555" stroke-width="1.5"/><rect x="4.5" y="3.5" width="9" height="11" fill="none" stroke="#555" stroke-width="1.1"/><path d="M6.5 6.5h5M6.5 9h5M6.5 11.5h5" stroke="#555" stroke-width="1"/></svg>
<svg class="r" style="left:1629px;top:1024px;" width="18" height="18" viewBox="0 0 18 18"><rect x="0.7" y="0.7" width="16.6" height="16.6" fill="none" stroke="#444" stroke-width="1.4"/><path d="M1 11h9V1M5 1v10" fill="none" stroke="#444" stroke-width="1.4"/></svg>
<div class="r" style="left:1670px;top:1032px;width:10px;height:1.2px;background:#555;"></div>
<div class="r" style="left:1686px;top:1033px;width:125px;height:1px;background:#b0b0b0;"></div>
<div class="r" style="left:1746px;top:1026px;width:6px;height:14px;background:#6d6d6d;"></div>
<div class="r" style="left:1817px;top:1032px;width:10px;height:1.2px;background:#555;"></div>
<div class="r" style="left:1821.4px;top:1027px;width:1.2px;height:11px;background:#555;"></div>
<div class="t" style="left:1843.50px;top:1027.60px;font-size:13px;line-height:13px;color:#555555;white-space:pre;">100 %</div>
<div class="t" style="left:13.50px;top:185.50px;font-size:12.5px;line-height:12.5px;color:#4a4a4a;letter-spacing:0.097px;">Буфер обмена</div>
<div class="t" style="left:248.00px;top:185.50px;font-size:12.5px;line-height:12.5px;color:#4a4a4a;letter-spacing:-0.031px;">Шрифт</div>
<div class="t" style="left:610.00px;top:185.50px;font-size:12.5px;line-height:12.5px;color:#4a4a4a;letter-spacing:0.051px;">Выравнивание</div>
<div class="t" style="left:974.00px;top:185.50px;font-size:12.5px;line-height:12.5px;color:#4a4a4a;letter-spacing:0.087px;">Число</div>
<div class="t" style="left:1250.00px;top:185.50px;font-size:12.5px;line-height:12.5px;color:#4a4a4a;letter-spacing:-0.653px;">Стили</div>
<div class="t" style="left:1483.00px;top:185.50px;font-size:12.5px;line-height:12.5px;color:#4a4a4a;letter-spacing:-0.025px;">Ячейки</div>
<div class="t" style="left:1645.00px;top:185.50px;font-size:12.5px;line-height:12.5px;color:#4a4a4a;letter-spacing:0.060px;">Редактирование</div>
<svg class="r" style="left:120px;top:186px;" width="11" height="11" viewBox="0 0 11 11"><path d="M0.5 8V0.5H8" fill="none" stroke="#555" stroke-width="1"/><path d="M3 3l7 7M10 5v5H5" fill="none" stroke="#555" stroke-width="1"/></svg>
<svg class="r" style="left:408px;top:186px;" width="11" height="11" viewBox="0 0 11 11"><path d="M0.5 8V0.5H8" fill="none" stroke="#555" stroke-width="1"/><path d="M3 3l7 7M10 5v5H5" fill="none" stroke="#555" stroke-width="1"/></svg>
<svg class="r" style="left:892px;top:186px;" width="11" height="11" viewBox="0 0 11 11"><path d="M0.5 8V0.5H8" fill="none" stroke="#555" stroke-width="1"/><path d="M3 3l7 7M10 5v5H5" fill="none" stroke="#555" stroke-width="1"/></svg>
<svg class="r" style="left:1086px;top:186px;" width="11" height="11" viewBox="0 0 11 11"><path d="M0.5 8V0.5H8" fill="none" stroke="#555" stroke-width="1"/><path d="M3 3l7 7M10 5v5H5" fill="none" stroke="#555" stroke-width="1"/></svg>
<div class="r" style="left:134px;top:87px;width:1px;height:109px;background:#c8c6c4;"></div>
<div class="r" style="left:421px;top:87px;width:1px;height:109px;background:#c8c6c4;"></div>
<div class="r" style="left:905px;top:87px;width:1px;height:109px;background:#c8c6c4;"></div>
<div class="r" style="left:1100px;top:87px;width:1px;height:109px;background:#c8c6c4;"></div>
<div class="r" style="left:1435px;top:87px;width:1px;height:109px;background:#c8c6c4;"></div>
<div class="r" style="left:1573px;top:87px;width:1px;height:109px;background:#c8c6c4;"></div>
<div class="r" style="left:1814px;top:87px;width:1px;height:109px;background:#c8c6c4;"></div>
<svg class="r" style="left:1879px;top:189px;" width="13" height="7" viewBox="0 0 13 7"><path d="M0.5 6.5l6-6l6 6" fill="none" stroke="#444" stroke-width="1.3"/></svg>
<svg class="r" style="left:29px;top:89px;" width="37" height="41" viewBox="0 0 37 41"><rect x="2" y="8" width="25.5" height="29.5" fill="#fafafa" stroke="#e39436" stroke-width="2"/><rect x="3.8" y="9.8" width="21.9" height="25.9" fill="none" stroke="#fde3a8" stroke-width="1.4"/><path d="M6.5 12.3V6.8H11.2A3.6 3.6 0 0 1 17.8 6.8H22.4V12.3z" fill="#fafafa" stroke="#777" stroke-width="1.5"/><rect x="17.6" y="17.6" width="17.3" height="22" fill="#fafafa" stroke="#444" stroke-width="1.6"/></svg>
<div class="t" style="left:13.60px;top:135.40px;font-size:14px;line-height:14px;color:#404040;letter-spacing:0.094px;">Вставить</div>
<svg class="r" style="left:40px;top:159px;" width="8" height="5" viewBox="0 0 8 5"><path d="M0.5 0.5l3.5 3.0l3.5 -3.0" fill="none" stroke="#444" stroke-width="1.2"/></svg>
<svg class="r" style="left:83px;top:90px;" width="16" height="22" viewBox="0 0 16 22"><path d="M3 1l8.5 13M13 1L4.5 14" stroke="#333" stroke-width="1"/><circle cx="3.8" cy="17" r="2.4" fill="none" stroke="#2b88d8" stroke-width="1.4"/><circle cx="12.2" cy="17" r="2.4" fill="none" stroke="#2b88d8" stroke-width="1.4"/></svg>
<svg class="r" style="left:80px;top:120px;" width="22" height="22" viewBox="0 0 22 22"><path d="M1.5 1.5h6l2 2V18h-8z" fill="#fafafa" stroke="#444" stroke-width="1.2"/><path d="M8.5 6.5h7l4 4V20.5h-11z" fill="#fafafa" stroke="#444" stroke-width="1.2"/><path d="M11 14h6M11 17h6" stroke="#444" stroke-width="1"/></svg>
<svg class="r" style="left:110px;top:131px;" width="8" height="5" viewBox="0 0 8 5"><path d="M0.5 0.5l3.5 3.0l3.5 -3.0" fill="none" stroke="#444" stroke-width="1.2"/></svg>
<svg class="r" style="left:80px;top:150px;" width="22" height="22" viewBox="0 0 22 22"><path d="M1.5 9.5C5 8.5 8 7.5 9.8 5.7L16.7 12.5C15 14.5 12 17 9.8 19.2z" fill="#fafafa" stroke="#e08a2a" stroke-width="1.1" stroke-linejoin="round"/><path d="M3.8 12.3L14.6 14.6L9.8 19.2z" fill="#f7b34c" stroke="#e08a2a" stroke-width="0.8"/><path d="M13.6 8.4L19.4 2.6" stroke="#333" stroke-width="4" stroke-linecap="round"/><path d="M13.6 8.4L19.4 2.6" stroke="#fafafa" stroke-width="1.4" stroke-linecap="round"/><path d="M10.4 5L17.2 11.8" stroke="#333" stroke-width="3.6" stroke-linecap="round"/><path d="M10.6 5.2L17 11.6" stroke="#fafafa" stroke-width="1.2" stroke-linecap="round"/></svg>
<div class="r" style="left:145px;top:97px;width:144px;height:29px;background:#ffffff;border:1px solid #c8c6c4;box-sizing:border-box;"></div>
<div class="t" style="left:148.50px;top:105.40px;font-size:14.5px;line-height:14.5px;color:#404040;letter-spacing:0.248px;">Arial</div>
<svg class="r" style="left:277px;top:111px;" width="8" height="5" viewBox="0 0 8 5"><path d="M0.5 0.5l3.5 3.0l3.5 -3.0" fill="none" stroke="#444" stroke-width="1.2"/></svg>
<div class="r" style="left:291px;top:97px;width:62px;height:29px;background:#ffffff;border:1px solid #c8c6c4;box-sizing:border-box;"></div>
<div class="t" style="left:294.50px;top:105.40px;font-size:14.5px;line-height:14.5px;color:#404040;">11</div>
<svg class="r" style="left:341px;top:111px;" width="8" height="5" viewBox="0 0 8 5"><path d="M0.5 0.5l3.5 3.0l3.5 -3.0" fill="none" stroke="#444" stroke-width="1.2"/></svg>
<svg class="r" style="left:359px;top:100px;" width="14" height="18" viewBox="0 0 14 18"><path d="M0.8 17.5L7 1L13.2 17.5M3 11.5h8" fill="none" stroke="#444" stroke-width="1.4"/></svg>
<svg class="r" style="left:373px;top:102px;" width="7" height="5" viewBox="0 0 7 5"><path d="M0.5 4l3-3l3 3" fill="none" stroke="#2b88d8" stroke-width="1.3"/></svg>
<svg class="r" style="left:391px;top:104px;" width="13" height="14" viewBox="0 0 13 14"><path d="M0.8 13.5L6.5 1L12.2 13.5M2.8 9h7.4" fill="none" stroke="#444" stroke-width="1.4"/></svg>
<svg class="r" style="left:403px;top:102px;" width="7" height="5" viewBox="0 0 7 5"><path d="M0.5 1l3 3l3-3" fill="none" stroke="#2b88d8" stroke-width="1.3"/></svg>
<div class="t" style="left:150.00px;top:141.40px;font-size:17px;line-height:17px;color:#333;font-weight:bold;">Ж</div>
<div class="t" style="left:183.00px;top:141.40px;font-size:17px;line-height:17px;color:#444;font-style:italic;">К</div>
<div class="t" style="left:212.00px;top:141.40px;font-size:17px;line-height:17px;color:#444;">Ч</div>
<div class="r" style="left:212px;top:157px;width:13px;height:1.5px;background:#444;"></div>
<svg class="r" style="left:237px;top:150px;" width="8" height="5" viewBox="0 0 8 5"><path d="M0.5 0.5l3.5 3.0l3.5 -3.0" fill="none" stroke="#444" stroke-width="1.2"/></svg>
<div class="r" style="left:256px;top:138px;width:1px;height:27px;background:#c8c6c4;"></div>
<svg class="r" style="left:265px;top:141px;" width="20" height="20" viewBox="0 0 20 20"><path d="M1 1h18v18M1 1v18M10 1v18M1 10h18" fill="none" stroke="#555" stroke-width="1" stroke-dasharray="1.5 1.5"/><path d="M0.5 18.8h19" stroke="#444" stroke-width="1.6"/></svg>
<svg class="r" style="left:294px;top:150px;" width="8" height="5" viewBox="0 0 8 5"><path d="M0.5 0.5l3.5 3.0l3.5 -3.0" fill="none" stroke="#444" stroke-width="1.2"/></svg>
<div class="r" style="left:312px;top:138px;width:1px;height:27px;background:#c8c6c4;"></div>
<svg class="r" style="left:319px;top:140px;" width="24" height="22" viewBox="0 0 24 22"><path d="M4 9l6-6l6 6l-6 6z" fill="#fafafa" stroke="#444" stroke-width="1.2"/><path d="M9 2.5c0-2 2-2 2 0v4" fill="none" stroke="#444" stroke-width="1"/><path d="M17 7c2 1.5 2.5 3 2.5 5" fill="none" stroke="#2b579a" stroke-width="1.5"/><circle cx="19" cy="12" r="1.3" fill="#2b579a"/><rect x="1" y="16.5" width="21" height="5" fill="#ffff00"/></svg>
<svg class="r" style="left:349px;top:150px;" width="8" height="5" viewBox="0 0 8 5"><path d="M0.5 0.5l3.5 3.0l3.5 -3.0" fill="none" stroke="#444" stroke-width="1.2"/></svg>
<svg class="r" style="left:370px;top:141px;" width="21" height="15" viewBox="0 0 21 15"><path d="M4 14.5L10.5 1L17 14.5M6.3 10h8.4" fill="none" stroke="#444" stroke-width="1.4"/></svg>
<div class="r" style="left:370px;top:157px;width:21px;height:4.5px;background:#ff0000;"></div>
<svg class="r" style="left:399px;top:150px;" width="8" height="5" viewBox="0 0 8 5"><path d="M0.5 0.5l3.5 3.0l3.5 -3.0" fill="none" stroke="#444" stroke-width="1.2"/></svg>
<svg class="r" style="left:437px;top:99px;" width="20" height="15" viewBox="0 0 20 15"><path d="M1 1.5h18M4 7.5h12M1 12.5h18" stroke="#444" stroke-width="1.3"/></svg>
<div class="r" style="left:463px;top:97px;width:28px;height:29px;background:#d2d2d2;border:1px solid #979593;box-sizing:border-box;"></div>
<svg class="r" style="left:467px;top:104px;" width="20" height="13" viewBox="0 0 20 13"><path d="M1 1.5h18M4 6.5h12M1 11.5h18" stroke="#444" stroke-width="1.3"/></svg>
<svg class="r" style="left:497px;top:109px;" width="20" height="13" viewBox="0 0 20 13"><path d="M1 1.5h18M4 6.5h12M1 11.5h18" stroke="#444" stroke-width="1.3"/></svg>
<div class="r" style="left:525px;top:98px;width:1px;height:28px;background:#c8c6c4;"></div>
<svg class="r" style="left:532px;top:99px;" width="24" height="23" viewBox="0 0 24 23"><text x="0" y="0" font-size="13" font-family="Liberation Sans" fill="#444" transform="translate(3.5,17.5) rotate(-45)">ab</text><path d="M6.5 20.5L19.5 7.5M13.5 6.5h6.5v6.5" fill="none" stroke="#2b88d8" stroke-width="1.3"/></svg>
<svg class="r" style="left:560px;top:111px;" width="8" height="5" viewBox="0 0 8 5"><path d="M0.5 0.5l3.5 3.0l3.5 -3.0" fill="none" stroke="#444" stroke-width="1.2"/></svg>
<div class="r" style="left:593px;top:95px;width:1px;height:73px;background:#c8c6c4;"></div>
<svg class="r" style="left:438px;top:141px;" width="19" height="18" viewBox="0 0 19 18"><path d="M0 1h18M0 6h12M0 11h18M0 16h12" stroke="#444" stroke-width="1.3" transform="translate(0.5,0.5)"/></svg>
<svg class="r" style="left:468px;top:141px;" width="19" height="18" viewBox="0 0 19 18"><path d="M0 1h18M3 6h12M0 11h18M3 16h12" stroke="#444" stroke-width="1.3" transform="translate(0.5,0.5)"/></svg>
<svg class="r" style="left:498px;top:141px;" width="19" height="18" viewBox="0 0 19 18"><path d="M0 1h18M6 6h12M0 11h18M6 16h12" stroke="#444" stroke-width="1.3" transform="translate(0.5,0.5)"/></svg>
<div class="r" style="left:525px;top:138px;width:1px;height:27px;background:#c8c6c4;"></div>
<svg class="r" style="left:535px;top:141px;" width="19" height="18" viewBox="0 0 19 18"><path d="M0.5 1.5h18M9 6.5h9.5M9 11.5h9.5M0.5 16.5h18" stroke="#444" stroke-width="1.3"/><path d="M7 9H1M4 6L1 9l3 3" fill="none" stroke="#2b88d8" stroke-width="1.3"/></svg>
<svg class="r" style="left:565px;top:141px;" width="19" height="18" viewBox="0 0 19 18"><path d="M0.5 1.5h18M9 6.5h9.5M9 11.5h9.5M0.5 16.5h18" stroke="#444" stroke-width="1.3"/><path d="M1 9h6M4 6l3 3l-3 3" fill="none" stroke="#2b88d8" stroke-width="1.3"/></svg>
<svg class="r" style="left:604px;top:100px;" width="22" height="23" viewBox="0 0 22 23"><text x="0" y="10" font-size="12.5" font-family="Liberation Sans" fill="#444">ab</text><text x="0" y="20.5" font-size="12.5" font-family="Liberation Sans" fill="#444">c</text><path d="M17.5 10.5c3 1 3.5 5 1 6.8c-1.5 1-4 1.2-9 1.2M12.5 15.5l-3 3l3 3" fill="none" stroke="#2b88d8" stroke-width="1.3"/></svg>
<div class="t" style="left:627.00px;top:104.50px;font-size:15px;line-height:15px;color:#404040;letter-spacing:-0.088px;">Переносить текст</div>
<svg class="r" style="left:602px;top:141px;" width="21" height="20" viewBox="0 0 21 20"><rect x="1.2" y="0.9" width="18.6" height="18.2" fill="#fafafa" stroke="#444" stroke-width="1.5"/><path d="M10.5 1V6M10.5 13.5V19" stroke="#444" stroke-width="1.1"/><rect x="1.2" y="6" width="18.6" height="7.5" fill="#dcecf9" stroke="#2b88d8" stroke-width="1.1"/><path d="M4 9.8h13M6.5 7.3L4 9.8l2.5 2.5M14.5 7.3l2.5 2.5l-2.5 2.5" fill="none" stroke="#2b88d8" stroke-width="1.2"/></svg>
<div class="t" style="left:627.00px;top:144.50px;font-size:15px;line-height:15px;color:#404040;letter-spacing:0.040px;">Объединить и поместить в центре</div>
<svg class="r" style="left:882px;top:150px;" width="8" height="5" viewBox="0 0 8 5"><path d="M0.5 0.5l3.5 3.0l3.5 -3.0" fill="none" stroke="#444" stroke-width="1.2"/></svg>
<div class="r" style="left:917px;top:97px;width:174px;height:29px;background:#ffffff;border:1px solid #c8c6c4;box-sizing:border-box;"></div>
<div class="t" style="left:920.00px;top:105.00px;font-size:15px;line-height:15px;color:#404040;letter-spacing:-0.089px;">Общий</div>
<svg class="r" style="left:1079px;top:111px;" width="8" height="5" viewBox="0 0 8 5"><path d="M0.5 0.5l3.5 3.0l3.5 -3.0" fill="none" stroke="#444" stroke-width="1.2"/></svg>
<svg class="r" style="left:919px;top:141px;" width="24" height="22" viewBox="0 0 24 22"><rect x="3" y="4.5" width="18" height="11" fill="#fafafa" stroke="#333" stroke-width="1.6"/><text x="5" y="13" font-size="9" font-family="Liberation Sans" font-weight="bold" fill="#444">cc</text><path d="M12.5 11.5v7c0 2.2 9 2.2 9 0v-7" fill="#fde7c8" stroke="#e07a26" stroke-width="1.2"/><ellipse cx="17" cy="11.5" rx="4.5" ry="1.8" fill="#fde7c8" stroke="#e07a26" stroke-width="1.2"/><path d="M12.5 15c0 2.2 9 2.2 9 0" fill="none" stroke="#e07a26" stroke-width="1.2"/></svg>
<svg class="r" style="left:950px;top:150px;" width="8" height="5" viewBox="0 0 8 5"><path d="M0.5 0.5l3.5 3.0l3.5 -3.0" fill="none" stroke="#444" stroke-width="1.2"/></svg>
<svg class="r" style="left:969px;top:141px;" width="22" height="20" viewBox="0 0 22 20"><circle cx="5.3" cy="5" r="3.3" fill="none" stroke="#444" stroke-width="1.3"/><circle cx="16.5" cy="14.8" r="3.3" fill="none" stroke="#444" stroke-width="1.3"/><path d="M17.5 1.5L5.5 18.5" stroke="#444" stroke-width="1.3"/></svg>
<div class="t" style="left:999.50px;top:145.40px;font-size:12px;line-height:12px;color:#555;letter-spacing:-0.261px;">000</div>
<div class="r" style="left:1028px;top:138px;width:1px;height:27px;background:#c8c6c4;"></div>
<svg class="r" style="left:1035px;top:140px;" width="24" height="23" viewBox="0 0 24 23"><text x="13.5" y="11" font-size="12" font-family="Liberation Sans" fill="#444">0</text><text x="6.5" y="21.5" font-size="12" font-family="Liberation Sans" fill="#444">,00</text><path d="M14 6.5H2.5M6.5 2.5L2.5 6.5l4 4" fill="none" stroke="#2b88d8" stroke-width="1.4"/></svg>
<svg class="r" style="left:1065px;top:140px;" width="24" height="23" viewBox="0 0 24 23"><text x="6.5" y="11" font-size="12" font-family="Liberation Sans" fill="#444">,00</text><text x="13.5" y="21.5" font-size="12" font-family="Liberation Sans" fill="#444">,0</text><path d="M1.5 15.5h12.5M10 11.5l4 4l-4 4" fill="none" stroke="#2b88d8" stroke-width="1.4"/></svg>
<svg class="r" style="left:1162px;top:94px;" width="38" height="31" viewBox="0 0 38 31"><g transform="translate(1.5,1.5)"><rect x="0" y="0" width="35" height="27" fill="#fafafa"/><path d="M27.8 0V27M0 9H35M0 18H35" stroke="#666" stroke-width="1.1"/><rect x="6.8" y="0.6" width="15.2" height="8.4" fill="#ff8d96" stroke="#b83232" stroke-width="1.3"/><rect x="6.8" y="9" width="10" height="9" fill="#7db7ea" stroke="#1f5fa0" stroke-width="1.3"/><rect x="6.8" y="18" width="17.5" height="8.4" fill="#ff8d96" stroke="#b83232" stroke-width="1.3"/><rect x="0" y="0" width="35" height="27" fill="none" stroke="#555" stroke-width="1.6"/></g></svg>
<div class="t" style="left:1148.00px;top:134.00px;font-size:15px;line-height:15px;color:#404040;letter-spacing:0.110px;">Условное</div>
<div class="t" style="left:1113.00px;top:154.00px;font-size:15px;line-height:15px;color:#404040;letter-spacing:0.197px;">форматирование</div>
<svg class="r" style="left:1240px;top:161px;" width="8" height="5" viewBox="0 0 8 5"><path d="M0.5 0.5l3.5 3.0l3.5 -3.0" fill="none" stroke="#444" stroke-width="1.2"/></svg>
<svg class="r" style="left:1291px;top:94px;" width="42" height="38" viewBox="0 0 42 38"><g transform="translate(1.5,1.5)"><rect x="0" y="0" width="35" height="27" fill="#fafafa"/><rect x="12" y="9" width="23" height="18" fill="#7db7ea"/><path d="M12 0V9M23.5 0V9M0 9H12M0 18H12" stroke="#555" stroke-width="1.2"/><path d="M23.5 9V27M12 18H35" stroke="#2364a8" stroke-width="1.2"/><path d="M12 9H35V27H12z" fill="none" stroke="#2364a8" stroke-width="1.2"/><rect x="0" y="0" width="35" height="27" fill="none" stroke="#555" stroke-width="1.6"/><path d="M36.5 9.5L22 25.5" stroke="#555" stroke-width="5" stroke-linecap="round"/><path d="M36.5 9.5L22 25.5" stroke="#fafafa" stroke-width="2.4" stroke-linecap="round"/><path d="M22.5 24c2.5 2 2.8 5.5 0.3 8c-3 3-8.5 3.5-13 2.3c3-1.3 3.5-4 5-7c1.5-3 5.2-5.3 7.7-3.3z" fill="#7db7ea" stroke="#2364a8" stroke-width="1.1"/></g></svg>
<div class="t" style="left:1254.00px;top:134.00px;font-size:15px;line-height:15px;color:#404040;letter-spacing:0.096px;">Форматировать</div>
<div class="t" style="left:1262.00px;top:154.00px;font-size:15px;line-height:15px;color:#404040;letter-spacing:-0.115px;">как таблицу</div>
<svg class="r" style="left:1348px;top:161px;" width="8" height="5" viewBox="0 0 8 5"><path d="M0.5 0.5l3.5 3.0l3.5 -3.0" fill="none" stroke="#444" stroke-width="1.2"/></svg>
<svg class="r" style="left:1378px;top:94px;" width="42" height="38" viewBox="0 0 42 38"><g transform="translate(1.5,1.5)"><rect x="0" y="0" width="35" height="27" fill="#fafafa"/><path d="M6.5 0V27M28.5 0V27M0 7H35M0 20.5H35" stroke="#666" stroke-width="1.1"/><rect x="6.5" y="7" width="22" height="13.5" fill="#7db7ea" stroke="#2364a8" stroke-width="1.3"/><rect x="0" y="0" width="35" height="27" fill="none" stroke="#555" stroke-width="1.6"/><path d="M36.5 9.5L22 25.5" stroke="#555" stroke-width="5" stroke-linecap="round"/><path d="M36.5 9.5L22 25.5" stroke="#fafafa" stroke-width="2.4" stroke-linecap="round"/><path d="M22.5 24c2.5 2 2.8 5.5 0.3 8c-3 3-8.5 3.5-13 2.3c3-1.3 3.5-4 5-7c1.5-3 5.2-5.3 7.7-3.3z" fill="#7db7ea" stroke="#2364a8" stroke-width="1.1"/></g></svg>
<div class="t" style="left:1376.00px;top:134.00px;font-size:15px;line-height:15px;color:#404040;letter-spacing:-0.804px;">Стили</div>
<div class="t" style="left:1370.00px;top:154.00px;font-size:15px;line-height:15px;color:#404040;letter-spacing:0.954px;">ячеек</div>
<svg class="r" style="left:1417px;top:161px;" width="8" height="5" viewBox="0 0 8 5"><path d="M0.5 0.5l3.5 3.0l3.5 -3.0" fill="none" stroke="#444" stroke-width="1.2"/></svg>
<svg class="r" style="left:1449px;top:90px;" width="21" height="19" viewBox="0 0 21 19"><rect x="0.8" y="0.8" width="19" height="16.4" fill="#fafafa" stroke="#444" stroke-width="1.5"/><path d="M1 6.2h19M1 11.8h19M7.3 1v16M13.5 1v16" stroke="#666" stroke-width="1"/><rect x="7.3" y="6.2" width="12.5" height="5.6" fill="#7db7ea" stroke="#2b88d8" stroke-width="0.8"/><path d="M9.5 9H1.5M4.5 6L1.5 9l3 3" fill="none" stroke="#2b88d8" stroke-width="1.4"/></svg>
<div class="t" style="left:1474.00px;top:92.00px;font-size:15px;line-height:15px;color:#404040;letter-spacing:-0.512px;">Вставить</div>
<svg class="r" style="left:1549px;top:97px;" width="8" height="5" viewBox="0 0 8 5"><path d="M0.5 0.5l3.5 3.0l3.5 -3.0" fill="none" stroke="#444" stroke-width="1.2"/></svg>
<svg class="r" style="left:1449px;top:119px;" width="21" height="19" viewBox="0 0 21 19"><rect x="0.8" y="0.8" width="19" height="16.4" fill="#fafafa" stroke="#444" stroke-width="1.5"/><path d="M1 6.2h19M1 11.8h19M7.3 1v16M13.5 1v16" stroke="#666" stroke-width="1"/><rect x="3" y="5.8" width="8.5" height="6.6" fill="#7db7ea" stroke="#2b579a" stroke-width="1.2"/><path d="M13 6l6 6M19 6l-6 6" stroke="#e81123" stroke-width="1.3"/></svg>
<div class="t" style="left:1474.00px;top:121.50px;font-size:15px;line-height:15px;color:#404040;letter-spacing:-0.378px;">Удалить</div>
<svg class="r" style="left:1543px;top:126px;" width="8" height="5" viewBox="0 0 8 5"><path d="M0.5 0.5l3.5 3.0l3.5 -3.0" fill="none" stroke="#444" stroke-width="1.2"/></svg>
<svg class="r" style="left:1449px;top:147px;" width="21" height="21" viewBox="0 0 21 21"><path d="M3.5 1.2h13M3.5 0v2.5M16.5 0v2.5" stroke="#2b88d8" stroke-width="1.1"/><g transform="translate(0,2.5)"><rect x="0.8" y="0.8" width="19" height="16.4" fill="#fafafa" stroke="#444" stroke-width="1.5"/><path d="M1 6.2h19M1 11.8h19M7.3 1v16M13.5 1v16" stroke="#666" stroke-width="1"/><rect x="4.3" y="5.2" width="11" height="7.4" fill="#7db7ea" stroke="#2b579a" stroke-width="1"/></g></svg>
<div class="t" style="left:1474.00px;top:150.50px;font-size:15px;line-height:15px;color:#404040;letter-spacing:0.143px;">Формат</div>
<svg class="r" style="left:1532px;top:155px;" width="8" height="5" viewBox="0 0 8 5"><path d="M0.5 0.5l3.5 3.0l3.5 -3.0" fill="none" stroke="#444" stroke-width="1.2"/></svg>
<svg class="r" style="left:1589px;top:90px;" width="18" height="19" viewBox="0 0 18 19"><path d="M16 1.5H1.5L9 9.5L1.5 17.5H16.5" fill="none" stroke="#444" stroke-width="1.3"/></svg>
<svg class="r" style="left:1616px;top:98px;" width="8" height="5" viewBox="0 0 8 5"><path d="M0.5 0.5l3.5 3.0l3.5 -3.0" fill="none" stroke="#444" stroke-width="1.2"/></svg>
<svg class="r" style="left:1587px;top:119px;" width="21" height="19" viewBox="0 0 21 19"><rect x="0.8" y="0.8" width="19" height="17" fill="#fafafa" stroke="#444" stroke-width="1.5"/><rect x="1" y="1" width="19" height="3.5" fill="#8a8a8a"/><path d="M1 4.5h19" stroke="#444" stroke-width="1"/><path d="M10.3 7v8.5M7 12.3l3.3 3.3l3.3-3.3" fill="none" stroke="#2b88d8" stroke-width="1.3"/></svg>
<svg class="r" style="left:1614px;top:127px;" width="8" height="5" viewBox="0 0 8 5"><path d="M0.5 0.5l3.5 3.0l3.5 -3.0" fill="none" stroke="#444" stroke-width="1.2"/></svg>
<svg class="r" style="left:1587px;top:147px;" width="22" height="22" viewBox="0 0 22 22"><path d="M1.5 13.5L12.7 1.9L19.8 8.8L8.4 20.1z" fill="#fafafa" stroke="#b146c2" stroke-width="1.5" stroke-linejoin="round"/><path d="M1.5 13.5L5.8 9L12.8 15.8L8.4 20.1z" fill="#d79ce2" stroke="#b146c2" stroke-width="1.5" stroke-linejoin="round"/></svg>
<svg class="r" style="left:1614px;top:156px;" width="8" height="5" viewBox="0 0 8 5"><path d="M0.5 0.5l3.5 3.0l3.5 -3.0" fill="none" stroke="#444" stroke-width="1.2"/></svg>
<svg class="r" style="left:1657px;top:91px;" width="38" height="36" viewBox="0 0 38 36"><text x="0.5" y="17" font-size="19.5" font-family="Liberation Sans" fill="#3489cf">A</text><text x="2" y="34" font-size="17" font-family="Liberation Sans" fill="#444">Я</text><path d="M17 9.3H36.3V12.5L29.6 18.3V27.3H24.4V18.3L17 12.5z" fill="#fafafa" stroke="#444" stroke-width="1.4" stroke-linejoin="round"/></svg>
<div class="t" style="left:1634.00px;top:134.00px;font-size:15px;line-height:15px;color:#404040;letter-spacing:0.075px;">Сортировка</div>
<div class="t" style="left:1637.00px;top:154.00px;font-size:15px;line-height:15px;color:#404040;letter-spacing:-0.125px;">и фильтр</div>
<svg class="r" style="left:1707px;top:161px;" width="8" height="5" viewBox="0 0 8 5"><path d="M0.5 0.5l3.5 3.0l3.5 -3.0" fill="none" stroke="#444" stroke-width="1.2"/></svg>
<svg class="r" style="left:1742px;top:90px;" width="40" height="40" viewBox="0 0 40 40"><circle cx="25" cy="14" r="12.5" fill="#fafafa" stroke="#444" stroke-width="1.4"/><path d="M16 23L2 37" stroke="#444" stroke-width="1.4"/></svg>
<div class="t" style="left:1734.00px;top:134.00px;font-size:15px;line-height:15px;color:#404040;letter-spacing:-0.058px;">Найти и</div>
<div class="t" style="left:1722.00px;top:154.00px;font-size:15px;line-height:15px;color:#404040;letter-spacing:-0.166px;">выделить</div>
<svg class="r" style="left:1794px;top:161px;" width="8" height="5" viewBox="0 0 8 5"><path d="M0.5 0.5l3.5 3.0l3.5 -3.0" fill="none" stroke="#444" stroke-width="1.2"/></svg>
<svg class="r" style="left:0;top:0;" width="260" height="381" viewBox="0 0 260 381"><defs><clipPath id="cp"><rect x="68" y="279" width="190" height="102"/></clipPath></defs><g clip-path="url(#cp)"><defs><clipPath id="by"><rect x="3" y="3" width="28" height="46"/></clipPath><clipPath id="bo"><rect x="3" y="3" width="24" height="46"/></clipPath><clipPath id="bg"><rect x="3" y="3" width="24.6" height="40"/></clipPath></defs><g transform="translate(184.5,280.3) rotate(34.8)"><rect x="0" y="0" width="34" height="52" fill="#fff"/><g clip-path="url(#by)"><circle cx="3" cy="3" r="9" fill="#f9b61a"/><circle cx="17" cy="22" r="3.6" fill="#f9b61a"/><circle cx="31" cy="49" r="9" fill="#f9b61a"/></g><rect x="3" y="3" width="28" height="46" fill="none" stroke="#f9b61a" stroke-width="1.4"/></g><g transform="translate(203,298) rotate(50.7)"><rect x="0" y="0" width="30" height="52" fill="#fff"/><g clip-path="url(#bo)"><circle cx="3" cy="3" r="8" fill="#ef7b23"/><circle cx="16" cy="21" r="3.6" fill="#ef7b23"/><circle cx="27" cy="49" r="9" fill="#ef7b23"/></g><rect x="3" y="3" width="24" height="46" fill="none" stroke="#ef7b23" stroke-width="1.4"/></g><g transform="translate(217.6,320.7) rotate(70.9)"><rect x="0" y="0" width="30.6" height="46" fill="#fff"/><g clip-path="url(#bg)"><circle cx="3" cy="3" r="8" fill="#3db04b"/><circle cx="10" cy="20" r="3.6" fill="#3db04b"/><circle cx="27" cy="43" r="9" fill="#3db04b"/><circle cx="27" cy="6" r="6" fill="#3db04b"/></g><rect x="3" y="3" width="24.6" height="40" fill="none" stroke="#3db04b" stroke-width="1.4"/></g>
<path d="M119 338 L152 314 L185 338 V381 H119 Z" fill="#e3dfdd"/>
<path d="M118 341 L152 316.5 L186 341" fill="none" stroke="#c9c5c3" stroke-width="3"/>
<rect x="141.5" y="354" width="21" height="27" fill="#6b6b6b"/>
<path d="M112.5 337.5 L152 309 L191.5 337.5" fill="none" stroke="#e31b3b" stroke-width="5.5" stroke-linecap="round" stroke-linejoin="round"/>
</g></svg>
<div class="r" style="left:53px;top:385px;width:214px;height:150px;background:#ffffe1;border:1px solid #767676;box-sizing:border-box;"></div>
<div class="t" style="left:61.00px;top:393.40px;font-size:14.5px;line-height:14.5px;color:#606060;letter-spacing:0.112px;">Составьте график</div>
<div class="t" style="left:61.00px;top:413.40px;font-size:14.5px;line-height:14.5px;color:#606060;letter-spacing:0.379px;">погашения кредита с</div>
<div class="t" style="left:61.00px;top:433.40px;font-size:14.5px;line-height:14.5px;color:#606060;letter-spacing:0.587px;">помощью этого кредитного</div>
<div class="t" style="left:61.00px;top:453.40px;font-size:14.5px;line-height:14.5px;color:#606060;letter-spacing:0.068px;">калькулятора. Сумма</div>
<div class="t" style="left:61.00px;top:473.40px;font-size:14.5px;line-height:14.5px;color:#606060;letter-spacing:0.446px;">процентов и общая сумма</div>
<div class="t" style="left:61.00px;top:493.40px;font-size:14.5px;line-height:14.5px;color:#606060;letter-spacing:0.261px;">платежей рассчитываются</div>
<div class="t" style="left:61.00px;top:513.40px;font-size:14.5px;line-height:14.5px;color:#606060;letter-spacing:0.247px;">автоматически.</div>
<svg class="r" style="left:0px;top:1037px;" width="10" height="10" viewBox="0 0 10 10"><path d="M0 0V2A8 8 0 0 0 8 10H0z" fill="#d4d4d4"/><path d="M0.5 0V2A7.5 7.5 0 0 0 8 9.5H10" fill="none" stroke="#217346" stroke-width="1.2"/></svg>
<svg class="r" style="left:1894px;top:1037px;" width="10" height="10" viewBox="0 0 10 10"><path d="M10 0V2A8 8 0 0 1 2 10H10z" fill="#d4d4d4"/><path d="M9.5 0V2A7.5 7.5 0 0 1 2 9.5H0" fill="none" stroke="#217346" stroke-width="1.2"/></svg>
</body></html>
